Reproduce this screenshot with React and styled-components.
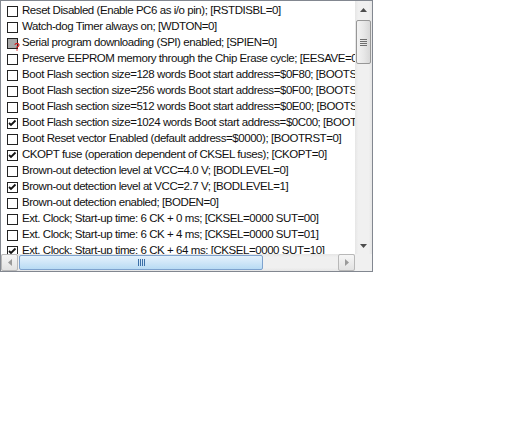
import React from "react";
import styled, { createGlobalStyle } from "styled-components";

const Global = createGlobalStyle`
  html, body { margin: 0; padding: 0; background: #fff; }
  body { font-family: "Liberation Sans", Arial, sans-serif; }
`;

const ListBox = styled.div`
  box-sizing: border-box;
  width: 373px;
  height: 272px;
  border: 1px solid #828790;
  display: grid;
  grid-template-columns: 354px 17px;
  grid-template-rows: 253px 17px;
  background: #fff;
  overflow: hidden;
`;

const Items = styled.div`
  overflow: hidden;
  padding-top: 1px;
  display: flex;
  flex-direction: column;
`;

const Row = styled.div`
  height: 16px;
  flex: none;
  display: flex;
  align-items: center;
  padding-left: 6px;
  gap: 4px;
  white-space: nowrap;
  font-size: 11.5px;
  color: #111;
`;

const Box = styled.span`
  position: relative;
  flex: none;
  box-sizing: border-box;
  width: 11px;
  height: 11px;
  border: 1px solid #222;
  background: ${(p) => (p.$grey ? "#a8a8a8" : "#fff")};
  display: flex;
  align-items: center;
  justify-content: center;
  margin-top: 2px;
`;

const Mark = styled.svg`
  position: absolute;
  left: 6px;
  top: 4px;
`;

const Label = styled.span`
  letter-spacing: -0.44px;
`;

const VScroll = styled.div`
  display: flex;
  flex-direction: column;
  background: linear-gradient(to right, #e6e6e6, #f0f0f0 20%, #f0f0f0 80%, #e6e6e6);
`;

const HScroll = styled.div`
  display: flex;
  align-items: stretch;
  background: linear-gradient(to bottom, #e6e6e6, #f0f0f0 20%, #f0f0f0 80%, #e6e6e6);
`;

const Corner = styled.div`
  background: #f0f0f0;
`;

const Arrow = styled.div`
  flex: none;
  width: 17px;
  height: 17px;
  box-sizing: border-box;
  display: flex;
  align-items: center;
  justify-content: center;
  border: 1px solid ${(p) => (p.$framed ? "#b8b8b8" : "transparent")};
  border-radius: 2px;
  background: ${(p) => (p.$framed ? "linear-gradient(#f6f6f6, #e2e2e2)" : "transparent")};
`;

const Track = styled.div`
  flex: 1;
  display: flex;
  flex-direction: ${(p) => (p.$vertical ? "column" : "row")};
  padding: ${(p) => (p.$vertical ? "2px 1px 0 1px" : "1px 0 1px 1px")};
`;

const VThumb = styled.div`
  box-sizing: border-box;
  height: 44px;
  border: 1px solid #979797;
  border-radius: 2px;
  background: linear-gradient(to right, #f3f3f3, #e8e8e8 50%, #d8d8d8);
  display: flex;
  align-items: center;
  justify-content: center;
`;

const HThumb = styled.div`
  box-sizing: border-box;
  width: 244px;
  border: 1px solid #7da2ce;
  border-radius: 2px;
  background: linear-gradient(to bottom, #e3f1fc, #cfe6f8 50%, #b8dbf4);
  display: flex;
  align-items: center;
  justify-content: center;
`;

function Check() {
  return (
    <svg width="9" height="9" viewBox="0 0 9 9">
      <path d="M1 4 L3 6 L7.5 1.5" fill="none" stroke="#111" strokeWidth="1.8" />
    </svg>
  );
}

function Question() {
  return (
    <Mark width="6" height="8" viewBox="0 0 6 8">
      <path d="M1 2 Q1 0.5 3 0.5 Q5 0.5 5 2 Q5 3.2 3 4 L3 5.3" fill="none" stroke="#d41e1e" strokeWidth="1.2" />
      <rect x="2.4" y="6.3" width="1.3" height="1.3" fill="#d41e1e" />
    </Mark>
  );
}

const items = [
  ["Reset Disabled (Enable PC6 as i/o pin); [RSTDISBL=0]", 0],
  ["Watch-dog Timer always on; [WDTON=0]", 0],
  ["Serial program downloading (SPI) enabled; [SPIEN=0]", 2],
  ["Preserve EEPROM memory through the Chip Erase cycle; [EESAVE=0]", 0],
  ["Boot Flash section size=128 words Boot start address=$0F80; [BOOTSZ=11]", 0],
  ["Boot Flash section size=256 words Boot start address=$0F00; [BOOTSZ=10]", 0],
  ["Boot Flash section size=512 words Boot start address=$0E00; [BOOTSZ=01]", 0],
  ["Boot Flash section size=1024 words Boot start address=$0C00; [BOOTSZ=00]", 1],
  ["Boot Reset vector Enabled (default address=$0000); [BOOTRST=0]", 0],
  ["CKOPT fuse (operation dependent of CKSEL fuses); [CKOPT=0]", 1],
  ["Brown-out detection level at VCC=4.0 V; [BODLEVEL=0]", 0],
  ["Brown-out detection level at VCC=2.7 V; [BODLEVEL=1]", 1],
  ["Brown-out detection enabled; [BODEN=0]", 0],
  ["Ext. Clock; Start-up time: 6 CK + 0 ms; [CKSEL=0000 SUT=00]", 0],
  ["Ext. Clock; Start-up time: 6 CK + 4 ms; [CKSEL=0000 SUT=01]", 0],
  ["Ext. Clock; Start-up time: 6 CK + 64 ms; [CKSEL=0000 SUT=10]", 1],
  ["Ext. Clock; Start-up time: 6 CK + 64 ms; [CKSEL=0000 SUT=11]", 0],
];

export default function App() {
  return (
    <>
      <Global />
      <ListBox>
        <Items>
          {items.map(([text, state], i) => (
            <Row key={i}>
              <Box $grey={state === 2}>
                {state === 1 && <Check />}
                {state === 2 && <Question />}
              </Box>
              <Label>{text}</Label>
            </Row>
          ))}
        </Items>
        <VScroll>
          <Arrow>
            <svg width="7" height="4" viewBox="0 0 7 4"><path d="M0 4 L3.5 0 L7 4Z" fill="#4d4d4d" /></svg>
          </Arrow>
          <Track $vertical>
            <VThumb>
              <svg width="7" height="7" viewBox="0 0 7 7">
                {[0, 2, 4, 6].map((y) => (
                  <rect key={y} x="0" y={y} width="7" height="1" fill="#6e6e6e" />
                ))}
              </svg>
            </VThumb>
          </Track>
          <Arrow>
            <svg width="7" height="4" viewBox="0 0 7 4"><path d="M0 0 L7 0 L3.5 4Z" fill="#4d4d4d" /></svg>
          </Arrow>
        </VScroll>
        <HScroll>
          <Arrow $framed>
            <svg width="4" height="7" viewBox="0 0 4 7"><path d="M4 0 L4 7 L0 3.5Z" fill="#9a9a9a" /></svg>
          </Arrow>
          <Track>
            <HThumb>
              <svg width="7" height="7" viewBox="0 0 7 7">
                {[0, 2, 4, 6].map((x) => (
                  <rect key={x} x={x} y="0" width="1" height="7" fill="#3b6fa8" />
                ))}
              </svg>
            </HThumb>
          </Track>
          <Arrow $framed>
            <svg width="4" height="7" viewBox="0 0 4 7"><path d="M0 0 L4 3.5 L0 7Z" fill="#9a9a9a" /></svg>
          </Arrow>
        </HScroll>
        <Corner />
      </ListBox>
    </>
  );
}
